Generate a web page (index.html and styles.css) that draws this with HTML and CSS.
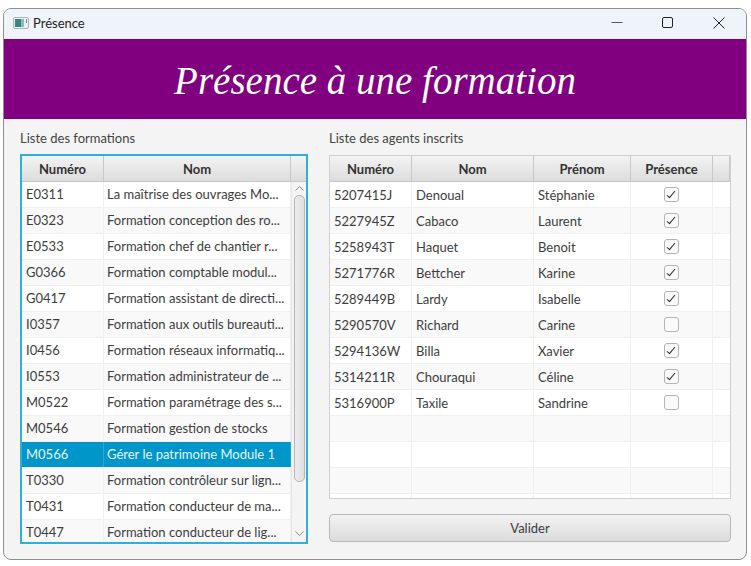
FILE: index.html
```html
<!DOCTYPE html>
<html lang="fr">
<head>
<meta charset="UTF-8">
<title>Présence</title>
<link rel="stylesheet" href="styles.css">
</head>
<body>

<div class="window">
    <!-- barre de titre -->
    <div class="titlebar">
        <svg class="app-icon" width="16" height="12" viewBox="0 0 16 12">
            <rect x="0.5" y="0.5" width="15" height="11" rx="1.5" fill="#eef1f3" stroke="#a9b3b8"/>
            <rect x="2" y="2" width="6" height="8" fill="#3f7f86"/>
            <rect x="8" y="2" width="3" height="8" fill="#86bcc2"/>
            <rect x="13" y="2" width="1" height="4" fill="#5f8f95"/>
        </svg>
        <span class="title">Présence</span>
        <div class="controls">
            <svg width="12" height="12" viewBox="0 0 12 12"><path d="M0.5 5.5H11.5" stroke="#555" fill="none"/></svg>
            <svg width="12" height="12" viewBox="0 0 12 12"><rect x="0.5" y="0.5" width="10" height="10" rx="1.5" stroke="#222" fill="none"/></svg>
            <svg width="12" height="12" viewBox="0 0 12 12"><path d="M0.5 0.5L11.5 11.5M11.5 0.5L0.5 11.5" stroke="#222" fill="none"/></svg>
        </div>
    </div>

    <div class="banner">Présence à une formation</div>

    <div class="content">
        <!-- liste des formations -->
        <div class="col-left">
            <div class="caption caption-left">Liste des formations</div>
            <div class="table table-focus">
                <div class="row head cols-left">
                    <div class="cell">Numéro</div>
                    <div class="cell">Nom</div>
                    <div class="cell"></div>
                </div>
                <div class="left-body">
                    <div class="rows">
                        <div class="row cols-left2"><div class="cell">E0311</div><div class="cell">La maîtrise des ouvrages Mo...</div></div>
                        <div class="row cols-left2"><div class="cell">E0323</div><div class="cell">Formation conception des ro...</div></div>
                        <div class="row cols-left2"><div class="cell">E0533</div><div class="cell">Formation chef de chantier r...</div></div>
                        <div class="row cols-left2"><div class="cell">G0366</div><div class="cell">Formation comptable modul...</div></div>
                        <div class="row cols-left2"><div class="cell">G0417</div><div class="cell">Formation assistant de directi...</div></div>
                        <div class="row cols-left2"><div class="cell">I0357</div><div class="cell">Formation aux outils bureauti...</div></div>
                        <div class="row cols-left2"><div class="cell">I0456</div><div class="cell">Formation réseaux informatiq...</div></div>
                        <div class="row cols-left2"><div class="cell">I0553</div><div class="cell">Formation administrateur de ...</div></div>
                        <div class="row cols-left2"><div class="cell">M0522</div><div class="cell">Formation paramétrage des s...</div></div>
                        <div class="row cols-left2"><div class="cell">M0546</div><div class="cell">Formation gestion de stocks</div></div>
                        <div class="row cols-left2 selected"><div class="cell">M0566</div><div class="cell">Gérer le patrimoine Module 1</div></div>
                        <div class="row cols-left2"><div class="cell">T0330</div><div class="cell">Formation contrôleur sur lign...</div></div>
                        <div class="row cols-left2"><div class="cell">T0431</div><div class="cell">Formation conducteur de ma...</div></div>
                        <div class="row cols-left2"><div class="cell">T0447</div><div class="cell">Formation conducteur de lig...</div></div>
                    </div>
                    <div class="scrollbar">
                        <svg class="arrow" width="9" height="5" viewBox="0 0 9 5"><path d="M0.5 4.5L4.5 0.5L8.5 4.5" stroke="#8c8c8c" fill="none"/></svg>
                        <div class="thumb"></div>
                        <svg class="arrow" width="9" height="5" viewBox="0 0 9 5"><path d="M0.5 0.5L4.5 4.5L8.5 0.5" stroke="#8c8c8c" fill="none"/></svg>
                    </div>
                </div>
            </div>
        </div>

        <!-- liste des agents -->
        <div class="col-right">
            <div class="caption">Liste des agents inscrits</div>
            <div class="table table-agents">
                <div class="row head cols-right">
                    <div class="cell">Numéro</div>
                    <div class="cell">Nom</div>
                    <div class="cell">Prénom</div>
                    <div class="cell">Présence</div>
                    <div class="cell"></div>
                </div>
                <div class="row cols-right"><div class="cell">5207415J</div><div class="cell">Denoual</div><div class="cell">Stéphanie</div><div class="cell check"><span class="box on"></span></div><div class="cell"></div></div>
                <div class="row cols-right"><div class="cell">5227945Z</div><div class="cell">Cabaco</div><div class="cell">Laurent</div><div class="cell check"><span class="box on"></span></div><div class="cell"></div></div>
                <div class="row cols-right"><div class="cell">5258943T</div><div class="cell">Haquet</div><div class="cell">Benoit</div><div class="cell check"><span class="box on"></span></div><div class="cell"></div></div>
                <div class="row cols-right"><div class="cell">5271776R</div><div class="cell">Bettcher</div><div class="cell">Karine</div><div class="cell check"><span class="box on"></span></div><div class="cell"></div></div>
                <div class="row cols-right"><div class="cell">5289449B</div><div class="cell">Lardy</div><div class="cell">Isabelle</div><div class="cell check"><span class="box on"></span></div><div class="cell"></div></div>
                <div class="row cols-right"><div class="cell">5290570V</div><div class="cell">Richard</div><div class="cell">Carine</div><div class="cell check"><span class="box"></span></div><div class="cell"></div></div>
                <div class="row cols-right"><div class="cell">5294136W</div><div class="cell">Billa</div><div class="cell">Xavier</div><div class="cell check"><span class="box on"></span></div><div class="cell"></div></div>
                <div class="row cols-right"><div class="cell">5314211R</div><div class="cell">Chouraqui</div><div class="cell">Céline</div><div class="cell check"><span class="box on"></span></div><div class="cell"></div></div>
                <div class="row cols-right"><div class="cell">5316900P</div><div class="cell">Taxile</div><div class="cell">Sandrine</div><div class="cell check"><span class="box"></span></div><div class="cell"></div></div>
                <div class="row cols-right"><div class="cell"></div><div class="cell"></div><div class="cell"></div><div class="cell"></div><div class="cell"></div></div>
                <div class="row cols-right"><div class="cell"></div><div class="cell"></div><div class="cell"></div><div class="cell"></div><div class="cell"></div></div>
                <div class="row cols-right"><div class="cell"></div><div class="cell"></div><div class="cell"></div><div class="cell"></div><div class="cell"></div></div>
                <div class="row cols-right"><div class="cell"></div><div class="cell"></div><div class="cell"></div><div class="cell"></div><div class="cell"></div></div>
            </div>
            <button class="validate">Valider</button>
        </div>
    </div>
</div>

</body>
</html>
```

FILE: styles.css
```css
html, body {
    margin: 0;
    height: 100%;
    background-color: #fff;
}

body {
    padding: 8px 4px 6px 3px;
    box-sizing: border-box;
    font-family: Lato, "Open Sans", sans-serif;
    font-size: 13px;
    color: #3d3d3d;
    overflow: hidden;
}

.window {
    height: 552px;
    box-sizing: border-box;
    border: 1px solid #8e8e8e;
    border-radius: 8px;
    background-color: #f4f4f4;
    overflow: hidden;
    display: flex;
    flex-direction: column;
}

.titlebar {
    height: 30px;
    flex: none;
    display: flex;
    align-items: center;
    padding-left: 9px;
    padding-bottom: 2px;
    box-sizing: border-box;
    background-color: #eff4fb;
}

.app-icon {
    margin-right: 4px;
}

.title {
    font-size: 13px;
    color: #222;
}

.controls {
    margin-left: auto;
    margin-right: 21px;
    display: flex;
    gap: 39px;
}

.banner {
    height: 80px;
    flex: none;
    background-color: #800080;
    color: #fff;
    font-family: "Liberation Serif", serif;
    font-style: italic;
    font-size: 39px;
    line-height: 84px;
    text-align: center;
}

.content {
    flex: 1;
    display: flex;
    gap: 21px;
    padding: 0 15px 0 16px;
}

.col-left {
    width: 288px;
    flex: none;
}

.col-right {
    flex: 1;
}

.caption {
    height: 36px;
    line-height: 39px;
    color: #444;
}

.caption-left {
    height: 35px;
}

.table {
    box-sizing: border-box;
    background-color: #fff;
    overflow: hidden;
}

.table-focus {
    height: 390px;
    border: 2px solid #2cb0dc;
}

.table-agents {
    height: 344px;
    border: 1px solid #d0d0d0;
}

.row {
    display: grid;
    height: 26px;
    box-sizing: border-box;
    border-bottom: 1px solid #f0f0f0;
    background-color: #fff;
}

.table-agents .row:nth-child(odd),
.rows .row:nth-child(even) {
    background-color: #f9f9f9;
}

.cols-left {
    grid-template-columns: 82px 187px 1fr;
}

.cols-left2 {
    grid-template-columns: 82px 187px;
}

.cols-right {
    grid-template-columns: 82px 122px 97px 82px 1fr;
}

.cell {
    padding-left: 4px;
    line-height: 25px;
    border-right: 1px solid #f0f0f0;
    white-space: nowrap;
    overflow: hidden;
}

.rows .cell:nth-child(2) {
    padding-left: 3px;
}

.table-agents .cell {
    line-height: 26px;
}

.row .cell:last-child {
    border-right: none;
}

.rows .cell:last-child {
    border-right: 1px solid #f0f0f0;
}

.row.head {
    height: 26px;
    background: linear-gradient(#f3f3f3, #dcdcdc);
    border-bottom: 1px solid #c8c8c8;
}

.table-agents .row.head {
    background: linear-gradient(#f3f3f3, #dcdcdc);
}

.head .cell,
.table-agents .head .cell {
    padding-left: 0;
    line-height: 27px;
    text-align: center;
    font-weight: 700;
    color: #333;
    border-right: 1px solid #c8c8c8;
}

.left-body {
    display: flex;
    height: 360px;
    overflow: hidden;
}

.rows {
    width: 269px;
    flex: none;
}

.selected,
.rows .selected:nth-child(even),
.rows .selected:nth-child(odd) {
    background-color: #0096c9;
    color: #e6f4fa;
}

.rows .selected .cell {
    border-right-color: #2ba6d1;
}

.scrollbar {
    flex: 1;
    display: flex;
    flex-direction: column;
    align-items: center;
    padding: 4px 0 6px;
    box-sizing: border-box;
    background-color: #f4f4f4;
    border-left: 1px solid #e6e6e6;
}

.thumb {
    width: 11px;
    height: 287px;
    margin-top: 4px;
    box-sizing: border-box;
    border: 1px solid #b5b5b5;
    border-radius: 5px;
    background: linear-gradient(to right, #ececec, #dedede);
}

.arrow:last-child {
    margin-top: auto;
}

.check {
    padding-left: 0;
    display: flex;
    align-items: center;
    justify-content: center;
}

.box {
    width: 15px;
    height: 15px;
    box-sizing: border-box;
    border: 1px solid #b5b5b5;
    border-radius: 3px;
    background-color: #fafafa;
    position: relative;
}

.box.on::after {
    content: "";
    position: absolute;
    left: 4px;
    top: 1px;
    width: 3px;
    height: 8px;
    border: solid #2a2a2a;
    border-width: 0 1.6px 1.6px 0;
    transform: rotate(40deg);
}

.validate {
    display: block;
    width: 100%;
    height: 28px;
    margin-top: 15px;
    font-family: inherit;
    font-size: 13px;
    color: #3d3d3d;
    border: 1px solid #b8b8b8;
    border-radius: 4px;
    background: linear-gradient(#f2f2f2, #dcdcdc);
}
```
